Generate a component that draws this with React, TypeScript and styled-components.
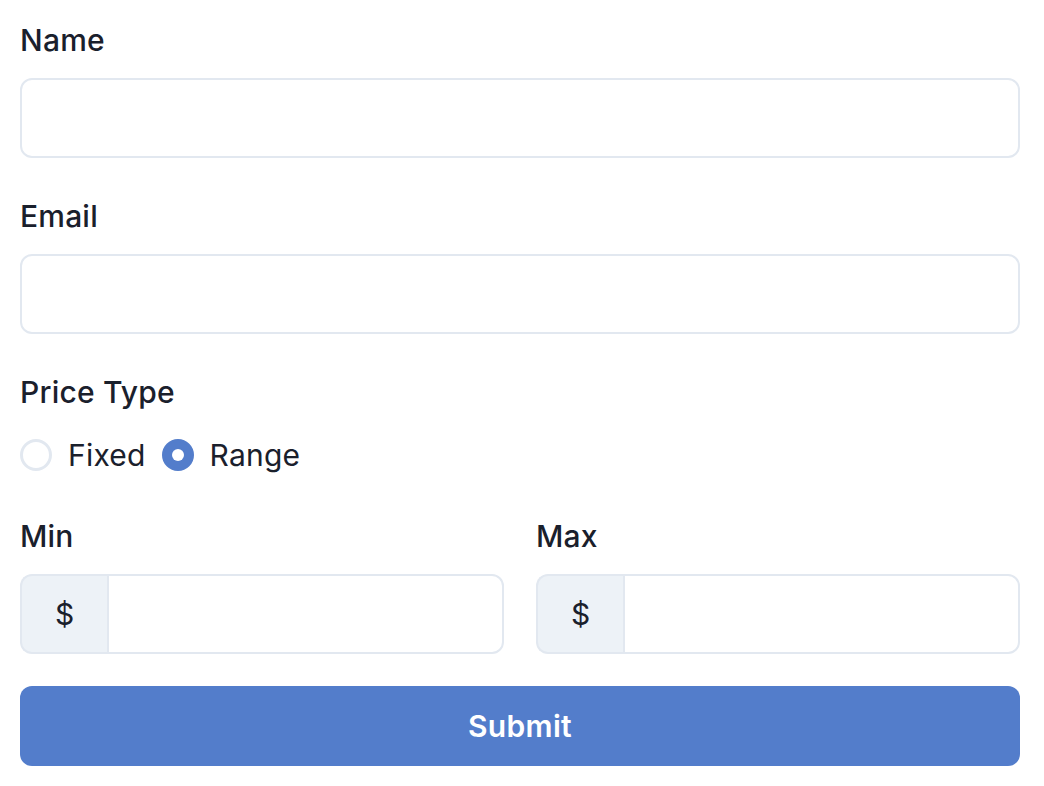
import React, { useState } from "react";
import styled, { createGlobalStyle } from "styled-components";

const Global = createGlobalStyle`
  html, body { margin: 0; padding: 0; background: #ffffff; }
  body { font-family: Inter, "Noto Sans", "Liberation Sans", sans-serif; color: #1a202c; }
  * { box-sizing: border-box; }
`;

const Form = styled.form`
  width: 1000px;
  margin: 20px 0 0 20px;
  display: flex;
  flex-direction: column;
`;

const Field = styled.div<{ $mb?: number }>`
  display: flex;
  flex-direction: column;
  margin-bottom: ${(p) => p.$mb ?? 38}px;
  flex: 1;
`;

const Label = styled.label<{ $mb?: number }>`
  font-size: 30px;
  line-height: 40px;
  font-weight: 500;
  letter-spacing: 0.2px;
  color: #1a202c;
  margin-bottom: ${(p) => p.$mb ?? 18}px;
`;

const Input = styled.input`
  height: 80px;
  width: 100%;
  border: 2px solid #e2e8f0;
  border-radius: 12px;
  padding: 0 24px;
  font-size: 30px;
  font-family: inherit;
  outline: none;
  background: #fff;
`;

const RadioRow = styled.div`
  display: flex;
  align-items: center;
  height: 40px;
  margin-top: 23px;
`;

const RadioItem = styled.label`
  display: flex;
  align-items: center;
  gap: 16px;
  margin-right: 16px;
  font-size: 30px;
  line-height: 40px;
  letter-spacing: 0.2px;
  color: #1a202c;
  cursor: pointer;
`;

const RadioCircle = styled.span<{ $checked: boolean }>`
  width: 32px;
  height: 32px;
  border-radius: 50%;
  border: 3px solid ${(p) => (p.$checked ? "#537dcb" : "#e2e8f0")};
  background: ${(p) => (p.$checked ? "#537dcb" : "#fff")};
  display: flex;
  align-items: center;
  justify-content: center;
  &::after {
    content: "";
    display: ${(p) => (p.$checked ? "block" : "none")};
    width: 12px;
    height: 12px;
    border-radius: 50%;
    background: #fff;
  }
`;

const Row = styled.div`
  display: flex;
  gap: 32px;
  margin-top: 41px;
`;

const Group = styled.div`
  display: flex;
  height: 80px;
`;

const Addon = styled.div`
  width: 87px;
  display: flex;
  align-items: center;
  justify-content: center;
  background: #edf2f7;
  border: 2px solid #e2e8f0;
  border-right: none;
  border-radius: 12px 0 0 12px;
  font-size: 30px;
  color: #1a202c;
`;

const GroupInput = styled(Input)`
  flex: 1;
  border-radius: 0 12px 12px 0;
`;

const Submit = styled.button`
  height: 80px;
  width: 100%;
  border: none;
  border-radius: 12px;
  background: #537dcb;
  color: #fff;
  font-family: inherit;
  font-size: 30px;
  font-weight: 600;
  letter-spacing: 0.3px;
  cursor: pointer;
`;

export default function App() {
  const [type, setType] = useState("range");
  return (
    <>
      <Global />
      <Form onSubmit={(e) => e.preventDefault()}>
        <Field>
          <Label>Name</Label>
          <Input />
        </Field>
        <Field>
          <Label>Email</Label>
          <Input />
        </Field>
        <Field $mb={0}>
          <Label $mb={0}>Price Type</Label>
          <RadioRow>
            <RadioItem onClick={() => setType("fixed")}>
              <RadioCircle $checked={type === "fixed"} />
              Fixed
            </RadioItem>
            <RadioItem onClick={() => setType("range")}>
              <RadioCircle $checked={type === "range"} />
              Range
            </RadioItem>
          </RadioRow>
        </Field>
        <Row>
          <Field $mb={32}>
            <Label>Min</Label>
            <Group>
              <Addon>$</Addon>
              <GroupInput />
            </Group>
          </Field>
          <Field $mb={32}>
            <Label>Max</Label>
            <Group>
              <Addon>$</Addon>
              <GroupInput />
            </Group>
          </Field>
        </Row>
        <Submit type="submit">Submit</Submit>
      </Form>
    </>
  );
}
